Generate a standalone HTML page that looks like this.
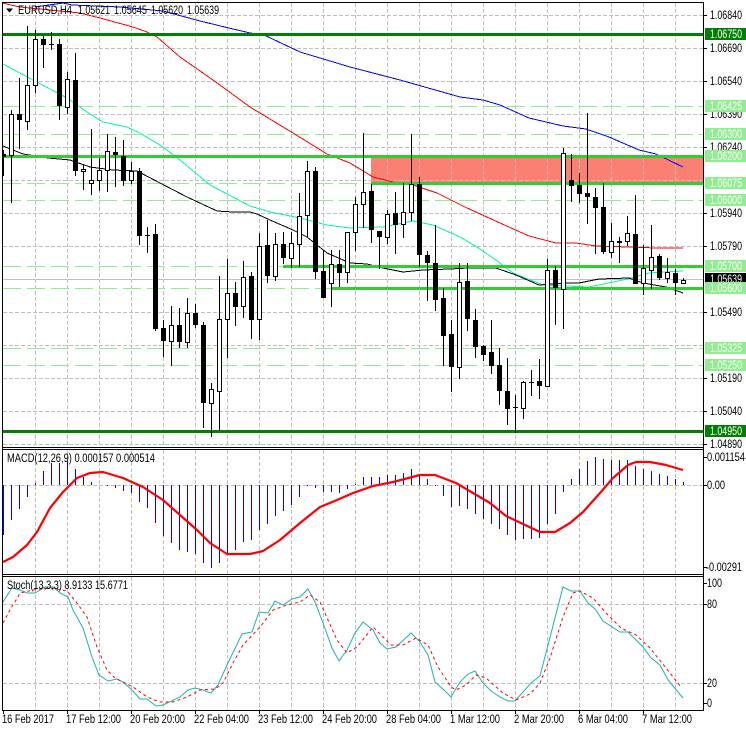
<!DOCTYPE html>
<html><head><meta charset="utf-8"><title>EURUSD,H4</title>
<style>
html,body{margin:0;padding:0;background:#fff;width:746px;height:731px;overflow:hidden}
svg{display:block}
text{font-family:"Liberation Sans",sans-serif;font-size:11.5px;fill:#000}
.t text{fill:#fff}
</style></head><body>
<svg width="746" height="731" viewBox="0 0 746 731" xmlns="http://www.w3.org/2000/svg">
<rect width="746" height="731" fill="#fff"/>
<!-- salmon zone -->
<rect x="371" y="156" width="332" height="27" fill="#FA8072"/>
<!-- grid -->
<g fill="none" stroke="#C0C0C0" stroke-width="1" stroke-dasharray="4 2" shape-rendering="crispEdges">
<path d="M3 15.5H703M3 48.5H703M3 81.5H703M3 114.5H703M3 147.5H703M3 180.5H703M3 213.5H703M3 246.5H703M3 312.5H703M3 345.5H703M3 378.5H703M3 411.5H703M3 444.5H703M3 485.5H703M3 604.5H703M3 683.5H703"/>
<path d="M35.5 3V447M67.5 3V447M99.5 3V447M131.5 3V447M163.5 3V447M195.5 3V447M227.5 3V447M259.5 3V447M291.5 3V447M323.5 3V447M355.5 3V447M387.5 3V447M419.5 3V447M451.5 3V447M483.5 3V447M515.5 3V447M547.5 3V447M579.5 3V447M611.5 3V447M643.5 3V447M675.5 3V447"/>
<path d="M35.5 450V574M67.5 450V574M99.5 450V574M131.5 450V574M163.5 450V574M195.5 450V574M227.5 450V574M259.5 450V574M291.5 450V574M323.5 450V574M355.5 450V574M387.5 450V574M419.5 450V574M451.5 450V574M483.5 450V574M515.5 450V574M547.5 450V574M579.5 450V574M611.5 450V574M643.5 450V574M675.5 450V574"/>
<path d="M35.5 577V710M67.5 577V710M99.5 577V710M131.5 577V710M163.5 577V710M195.5 577V710M227.5 577V710M259.5 577V710M291.5 577V710M323.5 577V710M355.5 577V710M387.5 577V710M419.5 577V710M451.5 577V710M483.5 577V710M515.5 577V710M547.5 577V710M579.5 577V710M611.5 577V710M643.5 577V710M675.5 577V710"/>
</g>
<!-- bid line -->
<path d="M3 279.5H703" stroke="#C0C0C0" stroke-width="1" shape-rendering="crispEdges"/>
<!-- light dashed levels -->
<path d="M3 106.5H703M3 134.5H703M3 183.5H703M3 200.5H703M3 266.5H703M3 288.5H703M3 348.5H703M3 365.5H703" fill="none" stroke="#90EE90" stroke-width="1" stroke-dasharray="18 6" shape-rendering="crispEdges"/>
<!-- moving averages -->
<g fill="none" stroke-width="1" shape-rendering="crispEdges">
<polyline stroke="#0000FF" points="35,7 63,3 72,5 120,7 163,11 200,21 233,29 250,33 264,35 300,52 350,67 400,80 460,97 483,100 500,105 529,118 563,126 586,129 609,137 639,150 656,154 683,167"/>
<polyline stroke="#FF0000" points="2,3 20,7 80,13 100,18 133,27 147,32 157,37 180,57 213,80 250,107 293,133 327,154 350,163 373,177 393,182 413,185 437,193 467,208 500,223 529,236 556,243 576,243 596,246 629,247 656,248 683,248"/>
<polyline stroke="#00FA9A" points="3,64 33,80 67,98 87,112 103,122 127,127 140,133 163,147 180,160 210,185 250,206 270,212 300,218 327,225 350,228 383,227 413,221 433,225 460,237 477,247 496,260 513,273 543,285 589,287 623,280 649,273 683,271"/>
<polyline stroke="#000000" points="3,146 23,154 48,158 70,160 90,167 113,170 137,171 160,183 187,197 217,211 233,212 250,212 257,214 270,220 293,230 307,237 327,253 350,263 367,264 383,268 403,272 423,270 450,269 468,268 496,268 516,275 539,285 569,283 579,283 599,279 629,278 643,283 666,287 683,293"/>
</g>
<!-- trend levels -->
<g fill="none" stroke-width="3" shape-rendering="crispEdges">
<path d="M3 34.5H703M3 431.5H703" stroke="#008000"/>
<path d="M3 156.5H703M371 183.5H703M283 266.5H703M332 288.5H703" stroke="#32CD32"/>
</g>
<!-- wicks -->
<path fill="none" stroke="#000" stroke-width="1" shape-rendering="crispEdges" d="M3.5 150V176M11.5 110V203M19.5 78V149M27.5 26V130M35.5 30V93M43.5 36V68M51.5 32V50M59.5 39V120M67.5 72V114M75.5 53V176M83.5 164V190M91.5 129V195M99.5 158V191M107.5 134V192M115.5 137V187M123.5 140V186M131.5 162V184M139.5 168V245M147.5 227V253M155.5 224V331M163.5 320V357M171.5 306V366M179.5 308V348M187.5 298V348M195.5 304V328M203.5 322V428M211.5 383V437M219.5 276V431M227.5 259V358M235.5 282V326M243.5 261V318M251.5 272V339M259.5 233V340M267.5 220V283M275.5 233V281M283.5 232V264M291.5 232V268M299.5 193V267M307.5 161V237M315.5 167V279M323.5 250V298M331.5 250V307M339.5 250V287M347.5 232V283M355.5 197V251M363.5 133V228M371.5 184V243M379.5 231V269M387.5 210V244M395.5 192V254M403.5 183V238M411.5 134V221M419.5 177V267M427.5 251V301M435.5 225V311M443.5 288V366M451.5 320V392M459.5 263V379M467.5 263V331M475.5 309V358M483.5 345V361M491.5 320V374M499.5 348V405M507.5 358V425M515.5 395V433M523.5 381V419M531.5 370V396M539.5 359V399M547.5 259V387M555.5 266V325M563.5 148V329M571.5 154V202M579.5 173V203M587.5 113V224M595.5 188V254M603.5 183V254M611.5 223V258M619.5 237V263M627.5 216V246M635.5 195V284M643.5 245V295M651.5 225V289M659.5 254V280M667.5 258V283M675.5 269V295M683.5 278V283"/>
<!-- black bodies -->
<path fill="#000" shape-rendering="crispEdges" d="M3 154h3v3h-3zM17 114h5v6h-5zM41 39h5v6h-5zM57 44h5v62h-5zM73 80h5v91h-5zM113 152h5v3h-5zM121 156h5v25h-5zM137 171h5v65h-5zM153 234h5v95h-5zM161 328h5v13h-5zM177 325h5v17h-5zM193 313h5v12h-5zM201 325h5v78h-5zM233 293h5v14h-5zM249 276h5v44h-5zM265 245h5v31h-5zM281 244h5v14h-5zM313 171h5v101h-5zM321 271h5v27h-5zM337 264h5v9h-5zM369 191h5v39h-5zM377 231h5v6h-5zM393 213h5v12h-5zM417 184h5v71h-5zM425 255h5v8h-5zM433 263h5v37h-5zM441 298h5v38h-5zM449 334h5v33h-5zM465 281h5v38h-5zM473 320h5v27h-5zM481 346h5v9h-5zM489 352h5v14h-5zM497 365h5v26h-5zM505 391h5v18h-5zM537 381h5v5h-5zM553 270h5v18h-5zM569 180h5v6h-5zM577 185h5v9h-5zM585 193h5v4h-5zM593 197h5v11h-5zM601 207h5v45h-5zM633 234h5v50h-5zM657 256h5v22h-5zM673 273h5v10h-5zM49 44h5v1h-5zM145 235h5v1h-5zM513 407h5v1h-5zM529 382h5v1h-5zM617 241h5v2h-5z"/>
<!-- white bodies -->
<path fill="#fff" stroke="#000" stroke-width="1" shape-rendering="crispEdges" d="M9.5 114.5h4V155.5h-4zM25.5 85.5h4V121.5h-4zM33.5 39.5h4V85.5h-4zM65.5 79.5h4V107.5h-4zM81.5 169.5h4V171.5h-4zM89.5 180.5h4V183.5h-4zM97.5 170.5h4V180.5h-4zM105.5 151.5h4V170.5h-4zM129.5 171.5h4V180.5h-4zM169.5 325.5h4V341.5h-4zM185.5 313.5h4V342.5h-4zM209.5 389.5h4V403.5h-4zM217.5 319.5h4V391.5h-4zM225.5 293.5h4V319.5h-4zM241.5 277.5h4V306.5h-4zM257.5 246.5h4V319.5h-4zM273.5 244.5h4V276.5h-4zM289.5 243.5h4V258.5h-4zM297.5 216.5h4V244.5h-4zM305.5 171.5h4V215.5h-4zM329.5 264.5h4V283.5h-4zM345.5 232.5h4V272.5h-4zM353.5 204.5h4V232.5h-4zM361.5 192.5h4V204.5h-4zM385.5 214.5h4V237.5h-4zM401.5 212.5h4V224.5h-4zM409.5 184.5h4V212.5h-4zM457.5 282.5h4V367.5h-4zM521.5 382.5h4V408.5h-4zM545.5 270.5h4V386.5h-4zM561.5 153.5h4V289.5h-4zM609.5 241.5h4V252.5h-4zM625.5 233.5h4V241.5h-4zM641.5 268.5h4V283.5h-4zM649.5 257.5h4V270.5h-4zM665.5 272.5h4V278.5h-4zM681.5 280.5h4V283.5h-4z"/>
<!-- MACD histogram -->
<path fill="none" stroke="#0000FF" stroke-width="1" shape-rendering="crispEdges" d="M3.5 485V535M11.5 485V520M19.5 485V509M27.5 485V497M35.5 485V483M43.5 485V471M51.5 485V463M59.5 485V463M67.5 485V461M75.5 485V469M83.5 485V477M91.5 485V482M107.5 485V486M115.5 485V488M123.5 485V491M131.5 485V493M139.5 485V502M147.5 485V508M155.5 485V523M163.5 485V536M171.5 485V543M179.5 485V550M187.5 485V552M195.5 485V554M203.5 485V563M211.5 485V568M219.5 485V563M227.5 485V554M235.5 485V550M243.5 485V542M251.5 485V540M259.5 485V530M267.5 485V524M275.5 485V516M283.5 485V511M291.5 485V505M299.5 485V497M307.5 485V486M315.5 485V488M323.5 485V492M331.5 485V492M339.5 485V493M347.5 485V489M355.5 485V484M363.5 485V477M371.5 485V477M379.5 485V477M387.5 485V475M395.5 485V475M403.5 485V473M411.5 485V469M419.5 485V475M427.5 485V479M435.5 485V486M443.5 485V496M451.5 485V507M459.5 485V506M467.5 485V509M475.5 485V514M483.5 485V519M491.5 485V524M499.5 485V529M507.5 485V535M515.5 485V540M523.5 485V539M531.5 485V539M539.5 485V538M547.5 485V524M555.5 485V514M563.5 485V492M571.5 485V479M579.5 485V469M587.5 485V461M595.5 485V457M603.5 485V459M611.5 485V460M619.5 485V460M627.5 485V460M635.5 485V466M643.5 485V469M651.5 485V471M659.5 485V474M667.5 485V476M675.5 485V479M683.5 485V482"/>
<polyline fill="none" stroke="#FF0000" stroke-width="2.2" stroke-linejoin="round" points="3,562 13,557 27,545 37,532 50,508 63,492 77,478 90,473 103,472 123,478 143,487 163,500 180,515 197,530 210,543 227,554 250,554 263,551 280,540 300,523 320,507 337,500 353,493 373,486 393,482 420,475 435,475 456,483 473,493 490,503 506,516 523,524 540,532 555,532 570,523 583,512 600,493 613,478 628,465 636,462 650,462 666,465 683,470"/>
<!-- Stochastic -->
<polyline fill="none" stroke="#20B2AA" stroke-width="1" points="3,602 12,588 20,590 27,593 35,593 45,587 53,587 60,593 68,597 73,610 83,628 92,657 99,675 108,681 117,679 123,682 132,690 140,699 147,699 156,706 163,705 180,697 188,690 195,688 203,690 211,693 218,685 227,665 242,634 252,632 259,612 268,613 275,601 283,605 292,599 300,597 308,589 315,602 323,623 332,648 339,661 347,650 355,633 363,622 373,630 380,643 387,649 396,647 411,633 420,642 428,655 435,682 443,689 451,697 460,682 468,674 475,671 483,683 491,691 500,697 508,701 515,701 531,683 540,676 563,587 571,591 580,591 588,603 595,609 603,621 620,632 628,632 643,647 651,658 660,665 668,680 683,698"/>
<polyline fill="none" stroke="#FF0000" stroke-width="1" stroke-dasharray="3 3" points="3,623 11,608 18,597 20,593 33,590 50,588 67,591 77,603 87,617 97,647 107,670 115,678 133,687 147,697 160,702 173,702 187,697 200,690 215,689 223,683 233,663 243,645 260,627 273,610 287,605 300,602 310,595 320,602 328,620 337,640 347,653 357,647 373,627 381,635 391,645 403,645 416,638 428,645 438,667 451,687 456,690 466,685 476,675 486,678 503,693 516,700 530,694 540,683 550,658 563,617 573,593 580,591 593,598 606,613 621,628 636,635 650,648 666,668 681,687"/>
<!-- frames and ticks -->
<path fill="none" stroke="#000" stroke-width="1" shape-rendering="crispEdges" d="M2.5 2.5H703.5V710.5H2.5ZM2.5 447.5H703.5M2.5 449.5H703.5M2.5 574.5H703.5M2.5 576.5H703.5M703 15.5h4M703 48.5h4M703 81.5h4M703 114.5h4M703 147.5h4M703 213.5h4M703 246.5h4M703 312.5h4M703 378.5h4M703 411.5h4M703 444.5h4M703 457.5h4M703 485.5h4M703 567.5h4M703 583.5h4M703 604.5h4M703 683.5h4M703 703.5h4M3.5 710v4M67.5 710v4M131.5 710v4M195.5 710v4M259.5 710v4M323.5 710v4M387.5 710v4M451.5 710v4M515.5 710v4M579.5 710v4M643.5 710v4"/>
<!-- title -->
<path d="M6 8.5h7l-3.5 4z" fill="#000"/>
<text x="18" y="14" textLength="54" lengthAdjust="spacingAndGlyphs">EURUSD,H4</text>
<text x="78" y="14" textLength="32" lengthAdjust="spacingAndGlyphs">1.05621</text>
<text x="114" y="14" textLength="33" lengthAdjust="spacingAndGlyphs">1.05645</text>
<text x="151" y="14" textLength="32" lengthAdjust="spacingAndGlyphs">1.05620</text>
<text x="187" y="14" textLength="32" lengthAdjust="spacingAndGlyphs">1.05639</text>
<text x="7" y="462" textLength="148" lengthAdjust="spacingAndGlyphs">MACD(12,26,9) 0.000157 0.000514</text>
<text x="7" y="589" textLength="121" lengthAdjust="spacingAndGlyphs">Stoch(13,3,3) 8.9133 15.6771</text>
<!-- price axis -->
<text x="710" y="19" textLength="32" lengthAdjust="spacingAndGlyphs">1.06840</text>
<text x="710" y="52" textLength="32" lengthAdjust="spacingAndGlyphs">1.06690</text>
<text x="710" y="85" textLength="32" lengthAdjust="spacingAndGlyphs">1.06540</text>
<text x="710" y="118" textLength="32" lengthAdjust="spacingAndGlyphs">1.06390</text>
<text x="710" y="151" textLength="32" lengthAdjust="spacingAndGlyphs">1.06240</text>
<text x="710" y="217" textLength="32" lengthAdjust="spacingAndGlyphs">1.05940</text>
<text x="710" y="250" textLength="32" lengthAdjust="spacingAndGlyphs">1.05790</text>
<text x="710" y="316" textLength="32" lengthAdjust="spacingAndGlyphs">1.05490</text>
<text x="710" y="382" textLength="32" lengthAdjust="spacingAndGlyphs">1.05190</text>
<text x="710" y="415" textLength="32" lengthAdjust="spacingAndGlyphs">1.05040</text>
<text x="710" y="448" textLength="32" lengthAdjust="spacingAndGlyphs">1.04890</text>
<!-- price tags -->
<g fill="#90EE90" shape-rendering="crispEdges">
<rect x="705" y="28" width="41" height="12" fill="#008000"/>
<rect x="705" y="100" width="41" height="12"/>
<rect x="705" y="128" width="41" height="12"/>
<rect x="705" y="150" width="41" height="12"/>
<rect x="705" y="177" width="41" height="12"/>
<rect x="705" y="194" width="41" height="12"/>
<rect x="705" y="260" width="41" height="12"/>
<rect x="705" y="273" width="41" height="12" fill="#000"/>
</g>
<g class="t">
<text x="710" y="38" textLength="32" lengthAdjust="spacingAndGlyphs">1.06750</text>
<text x="710" y="110" textLength="32" lengthAdjust="spacingAndGlyphs">1.06425</text>
<text x="710" y="138" textLength="32" lengthAdjust="spacingAndGlyphs">1.06300</text>
<text x="710" y="160" textLength="32" lengthAdjust="spacingAndGlyphs">1.06200</text>
<text x="710" y="187" textLength="32" lengthAdjust="spacingAndGlyphs">1.06075</text>
<text x="710" y="204" textLength="32" lengthAdjust="spacingAndGlyphs">1.06000</text>
<text x="710" y="270" textLength="32" lengthAdjust="spacingAndGlyphs">1.05700</text>
<text x="710" y="283" textLength="32" lengthAdjust="spacingAndGlyphs">1.05639</text>
</g>
<g fill="#90EE90" shape-rendering="crispEdges">
<rect x="705" y="282" width="41" height="12"/>
<rect x="705" y="342" width="41" height="12"/>
<rect x="705" y="359" width="41" height="12"/>
<rect x="705" y="425" width="41" height="12" fill="#008000"/>
</g>
<g class="t">
<text x="710" y="292" textLength="32" lengthAdjust="spacingAndGlyphs">1.05600</text>
<text x="710" y="352" textLength="32" lengthAdjust="spacingAndGlyphs">1.05325</text>
<text x="710" y="369" textLength="32" lengthAdjust="spacingAndGlyphs">1.05250</text>
<text x="710" y="435" textLength="32" lengthAdjust="spacingAndGlyphs">1.04950</text>
</g>
<!-- indicator axes -->
<text x="707" y="461" textLength="38" lengthAdjust="spacingAndGlyphs">0.001154</text>
<text x="707" y="489" textLength="18" lengthAdjust="spacingAndGlyphs">0.00</text>
<text x="706" y="571" textLength="36" lengthAdjust="spacingAndGlyphs">-0.00291</text>
<text x="707" y="587" textLength="15" lengthAdjust="spacingAndGlyphs">100</text>
<text x="707" y="608" textLength="10" lengthAdjust="spacingAndGlyphs">80</text>
<text x="707" y="687" textLength="10" lengthAdjust="spacingAndGlyphs">20</text>
<text x="707" y="707" textLength="5" lengthAdjust="spacingAndGlyphs">0</text>
<!-- time axis -->
<text x="2" y="723" textLength="52" lengthAdjust="spacingAndGlyphs">16 Feb 2017</text>
<text x="66" y="723" textLength="55" lengthAdjust="spacingAndGlyphs">17 Feb 12:00</text>
<text x="130" y="723" textLength="55" lengthAdjust="spacingAndGlyphs">20 Feb 20:00</text>
<text x="194" y="723" textLength="55" lengthAdjust="spacingAndGlyphs">22 Feb 04:00</text>
<text x="258" y="723" textLength="55" lengthAdjust="spacingAndGlyphs">23 Feb 12:00</text>
<text x="322" y="723" textLength="55" lengthAdjust="spacingAndGlyphs">24 Feb 20:00</text>
<text x="386" y="723" textLength="55" lengthAdjust="spacingAndGlyphs">28 Feb 04:00</text>
<text x="450" y="723" textLength="50" lengthAdjust="spacingAndGlyphs">1 Mar 12:00</text>
<text x="514" y="723" textLength="50" lengthAdjust="spacingAndGlyphs">2 Mar 20:00</text>
<text x="578" y="723" textLength="50" lengthAdjust="spacingAndGlyphs">6 Mar 04:00</text>
<text x="642" y="723" textLength="50" lengthAdjust="spacingAndGlyphs">7 Mar 12:00</text>
</svg>
</body></html>
